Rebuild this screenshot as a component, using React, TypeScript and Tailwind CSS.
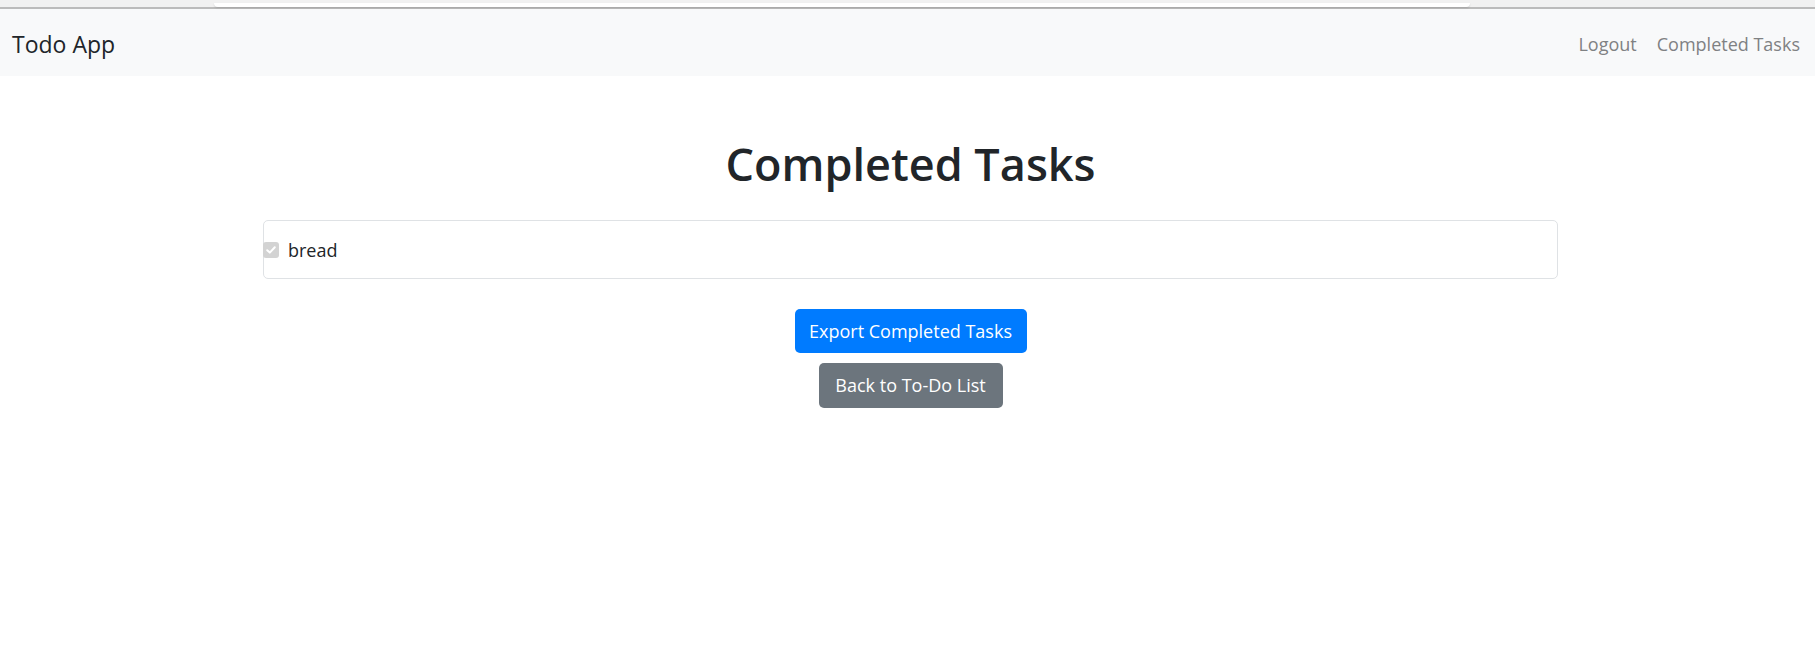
import React from "react";

const font = { fontFamily: '"Open Sans", "Noto Sans", sans-serif' };

const CheckedBox = () => (
  <span className="flex items-center justify-center w-[16px] h-[16px] rounded-[3px] bg-[#d3d3d3]">
    <svg width="12" height="12" viewBox="0 0 12 12" fill="none">
      <path d="M2.2 6.2 L4.8 8.6 L9.8 3.2" stroke="#ffffff" strokeWidth="2" strokeLinecap="round" strokeLinejoin="round" />
    </svg>
  </span>
);

const App = () => {
  const tasks = ["bread"];

  return (
    <div className="w-full min-h-[654px] bg-white text-[#212529]" style={font}>
      {/* browser chrome remnant */}
      <div className="h-[7px] bg-[#f1f1f1] px-[214px] flex items-end">
        <div className="w-[1256px] h-[4px] bg-white rounded-b-[6px] shadow-[0_1px_2px_rgba(0,0,0,0.12)]" />
      </div>
      <div className="h-[2px] bg-[#bbbbbb]" />

      <nav className="h-[67px] bg-[#f8f9fa] flex items-center justify-between pl-[12px] pr-[15px]">
        <a href="#" className="text-[23px] leading-none text-[#212529] pt-[3px]">
          Todo App
        </a>
        <div className="flex items-center gap-[20px] text-[18px] leading-none text-[#7f8183] pt-[2px]">
          <a href="#">Logout</a>
          <a href="#">Completed Tasks</a>
        </div>
      </nav>

      <main className="flex flex-col items-center pl-[6px]">
        <h1 className="mt-[59px] mb-[27px] text-[45px] leading-[58px] font-semibold text-[#212529]">
          Completed Tasks
        </h1>

        <ul className="w-[1295px] border border-[#dfe2e5] rounded-[5px]">
          {tasks.map((t) => (
            <li key={t} className="h-[57px] flex items-center">
              <span className="-ml-px mt-[1px]">
                <CheckedBox />
              </span>
              <span className="ml-[9px] text-[18px] text-[#212529] pt-[2px]">{t}</span>
            </li>
          ))}
        </ul>

        <button className="mt-[30px] w-[232px] h-[44px] rounded-[5px] bg-[#007bff] text-white text-[18px]">
          Export Completed Tasks
        </button>
        <button className="mt-[10px] w-[184px] h-[45px] rounded-[5px] bg-[#6c757d] text-white text-[18px]">
          Back to To-Do List
        </button>
      </main>
    </div>
  );
};

export default App;
